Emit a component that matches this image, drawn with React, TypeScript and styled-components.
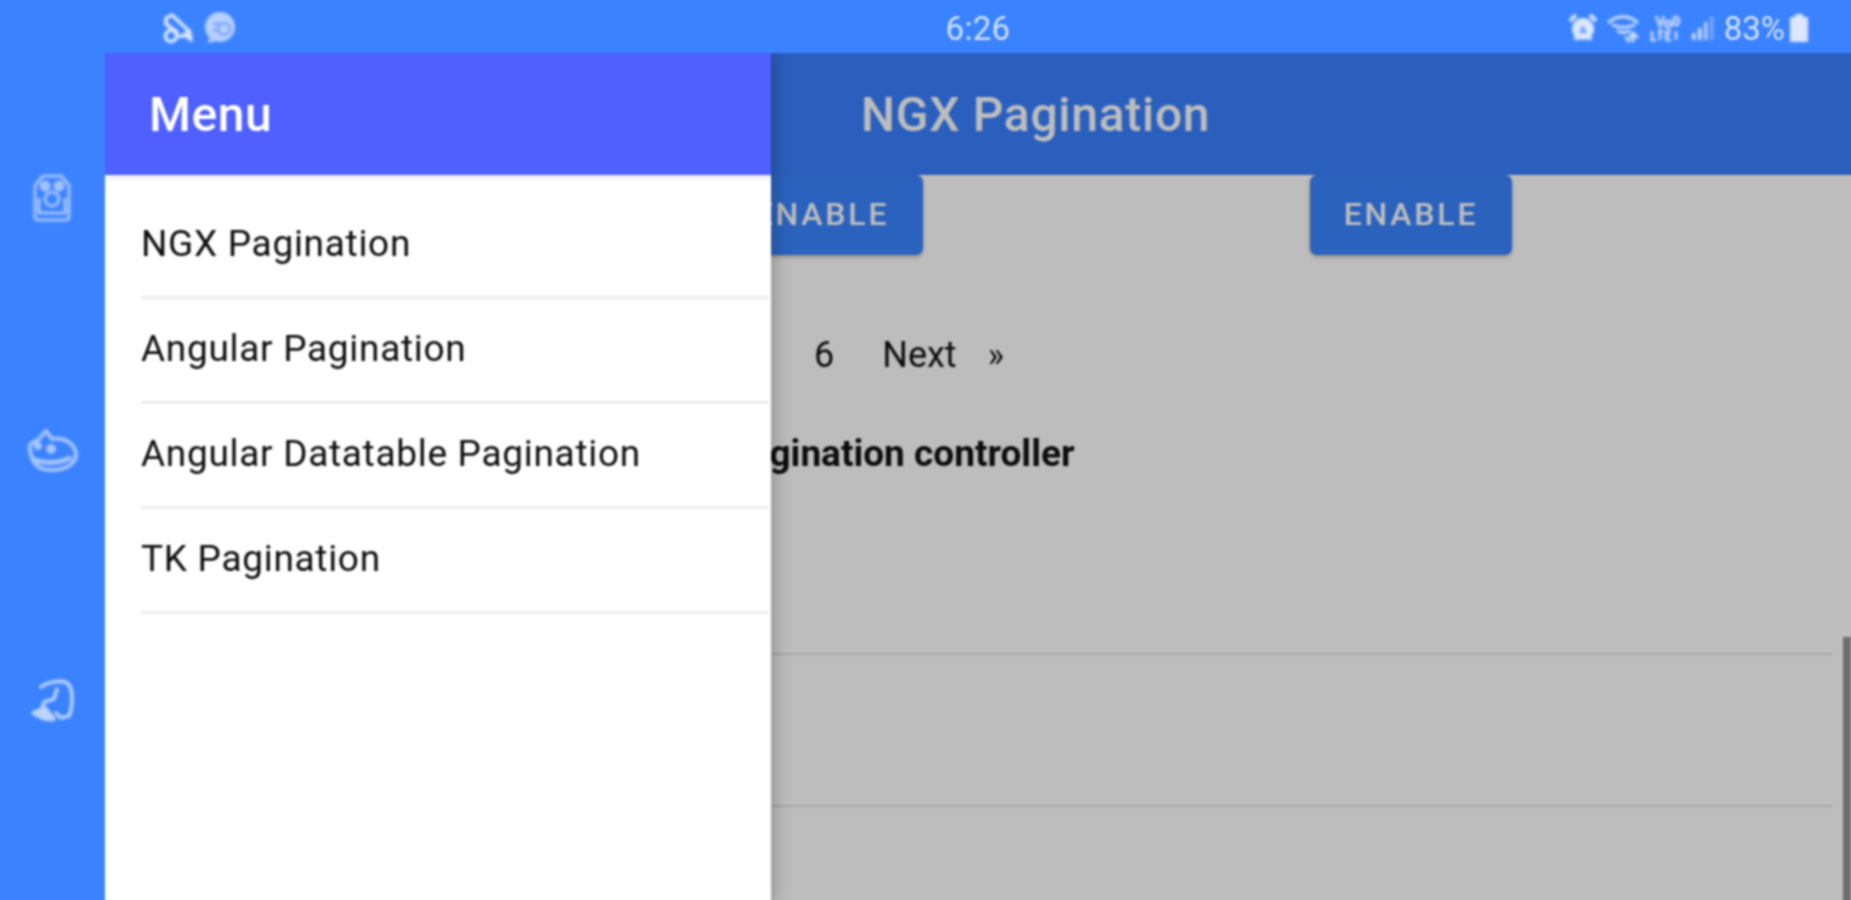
import React from "react";
import styled, { createGlobalStyle } from "styled-components";

const Global = createGlobalStyle`
  html, body { margin: 0; padding: 0; height: 100%; overflow: hidden; background: #3a82ff; }
  #root { height: 100%; }
  * { box-sizing: border-box; }
`;

const Page = styled.div`
  width: 1855px;
  height: 904px;
  display: flex;
  flex-direction: column;
  overflow: hidden;
  background: #3a82ff;
  font-family: Roboto, "Liberation Sans", sans-serif;
  filter: blur(0.8px);
`;

const StatusBar = styled.div`
  height: 53px;
  flex: none;
  display: grid;
  grid-template-columns: 1fr auto 1fr;
  align-items: center;
  padding: 3px 47px 0 163px;
  color: #cfe0ff;
`;

const StatusGroup = styled.div<{ $end?: boolean }>`
  display: flex;
  align-items: center;
  gap: ${(p) => (p.$end ? "9px" : "11px")};
  justify-content: ${(p) => (p.$end ? "flex-end" : "flex-start")};
`;

const Clock = styled.span`
  font-size: 33px;
  margin-left: -15px;
  letter-spacing: 0.3px;
`;

const Percent = styled.span`
  font-size: 33px;
  margin-right: -4px;
`;

const Body = styled.div`
  flex: 1;
  display: flex;
  min-height: 0;
`;

const Rail = styled.nav`
  width: 105px;
  flex: none;
  display: flex;
  flex-direction: column;
  align-items: center;
  padding-top: 121px;
  gap: 206px;
  margin-left: -1px;
`;

const AppArea = styled.div`
  flex: 1;
  position: relative;
  background: #fff;
  overflow: hidden;
  margin-left: 1px;
`;

const Toolbar = styled.header`
  height: 122px;
  background: #3a80ff;
  display: flex;
  align-items: center;
  padding-left: 756px;
`;

const PageTitle = styled.h1`
  margin: 0;
  color: #fff;
  font-size: 48px;
  font-weight: 500;
  letter-spacing: 0.7px;
`;

const ButtonRow = styled.div`
  display: flex;
  gap: 387px;
  padding-left: 616px;
`;

const ActionButton = styled.button`
  width: 202px;
  height: 80px;
  border: 0;
  border-radius: 7px;
  padding-bottom: 3px;
  background: #3a85ff;
  color: #fff;
  font-family: inherit;
  font-size: 32px;
  font-weight: 500;
  letter-spacing: 2.8px;
  box-shadow: 0 2px 4px rgba(0, 0, 0, 0.25);
`;

const Pager = styled.div`
  display: flex;
  align-items: center;
  margin-top: 79px;
  height: 42px;
  padding-left: 709px;
  color: #111;
`;

const PagerItem = styled.span<{ $gap: number; $small?: boolean }>`
  margin-right: ${(p) => p.$gap}px;
  font-size: ${(p) => (p.$small ? "35px" : "36px")};
`;

const SectionTitle = styled.h2`
  margin: 57px 0 0 621px;
  font-size: 37px;
  font-weight: 700;
  line-height: 42px;
  color: #111;
  white-space: nowrap;
`;

const Table = styled.div`
  margin: 28px 23px 0 0;
`;

const TableRow = styled.div`
  height: 152px;
  border-bottom: 2px solid #e2e2e2;
`;

const Scrollbar = styled.div`
  position: absolute;
  right: 4px;
  bottom: 0;
  width: 8px;
  height: 267px;
  background: #959595;
`;

const Backdrop = styled.div`
  position: absolute;
  inset: 0;
  background: rgba(0, 0, 0, 0.26);
`;

const Drawer = styled.aside`
  position: absolute;
  top: 0;
  left: 0;
  bottom: 0;
  width: 666px;
  background: #fff;
  display: flex;
  flex-direction: column;
  box-shadow: 4px 0 16px rgba(0, 0, 0, 0.22);
`;

const DrawerHeader = styled.div`
  height: 122px;
  flex: none;
  background: #4f60ff;
  display: flex;
  align-items: center;
  padding-left: 44px;
  color: #fff;
  font-size: 48px;
  font-weight: 500;
  letter-spacing: 0.5px;
  box-shadow: 0 3px 5px rgba(0, 0, 0, 0.1);
  position: relative;
`;

const MenuList = styled.ul`
  list-style: none;
  margin: 0;
  padding: 19px 0 0 36px;
`;

const MenuItem = styled.li`
  height: 105px;
  display: flex;
  align-items: center;
  padding-bottom: 4px;
  font-size: 37px;
  letter-spacing: 0.7px;
  color: #0d0d0d;
  border-bottom: 3px solid #ededed;
  margin-right: 2px;
`;

const Glyph = styled.svg`
  display: block;
  flex: none;
  overflow: visible;
  filter: blur(1.1px);
`;

const App: React.FC = () => (
  <Page>
    <Global />
    <StatusBar>
      <StatusGroup>
        <Glyph width="30" height="32" viewBox="0 0 30 32" fill="none" stroke="#dbe8ff" strokeWidth="3.6" strokeLinecap="round" strokeLinejoin="round">
          <path d="M3 12V6l6-3 18 17-5 2" />
          <path d="M3 12l11 8" />
          <circle cx="8" cy="24" r="5.5" />
          <path d="M14 24h14M24 24l4 4" />
        </Glyph>
        <Glyph width="33" height="32" viewBox="0 0 33 32">
          <circle cx="16" cy="15" r="15" fill="#b8d0ff" />
          <path d="M5 26l-1 5 8-2z" fill="#b8d0ff" />
          <circle cx="20" cy="17" r="6" fill="none" stroke="#7ca7ff" strokeWidth="2.5" />
          <path d="M9 12h9M9 18h5" stroke="#7ca7ff" strokeWidth="2.5" />
        </Glyph>
      </StatusGroup>
      <Clock>6:26</Clock>
      <StatusGroup $end>
        <Glyph width="30" height="30" viewBox="0 0 30 30">
          <circle cx="15" cy="16" r="11" fill="#dbe8ff" />
          <path d="M2 8l6-6M28 8l-6-6M7 27l2-3M23 27l-2-3" stroke="#dbe8ff" strokeWidth="4" />
          <path d="M11 20l4-8 4 8z" fill="#6f9fff" />
        </Glyph>
        <Glyph width="34" height="30" viewBox="0 0 34 30" fill="none" stroke="#cfe0ff" strokeWidth="3" strokeLinecap="round">
          <path d="M2 9c8-7 20-7 28 0" />
          <path d="M6 12c6 3 15 3 21 0" />
          <path d="M11 18c3 2 8 2 11 0" />
          <path d="M19 25l3 3M26 20v8M23 24l3-4 4 4" />
        </Glyph>
        <Glyph width="32" height="30" viewBox="0 0 32 30" fill="none" stroke="#c3d8ff" strokeWidth="2.8">
          <path d="M6 3l4 10 4-10M18 8a3 3 0 1 0 .01 0M24 3v10M26 3c4 3 4 7 0 10" />
          <path d="M2 18v9h4M10 18v9M8 18h5M16 18v9M16 18h5M16 22h4M16 27h5M26 18v9" />
        </Glyph>
        <Glyph width="24" height="30" viewBox="0 0 24 30">
          <rect x="1" y="20" width="3.5" height="7" fill="#d2e2ff" />
          <rect x="7" y="15" width="3.5" height="12" fill="#d2e2ff" />
          <rect x="13" y="9" width="3.5" height="18" fill="#b4ceff" />
          <rect x="19" y="3" width="3.5" height="24" fill="#7ea6ff" />
        </Glyph>
        <Percent>83%</Percent>
        <Glyph width="18" height="28" viewBox="0 0 18 28">
          <path d="M5 0h8v3h4a1 1 0 0 1 1 1v23a1 1 0 0 1-1 1H1a1 1 0 0 1-1-1V4a1 1 0 0 1 1-1h4z" fill="#dbe8ff" />
        </Glyph>
      </StatusGroup>
    </StatusBar>
    <Body>
      <Rail>
        <Glyph width="38" height="48" viewBox="0 0 38 48" fill="none" stroke="#a3c3ff" strokeWidth="3.2" strokeLinejoin="round">
          <path d="M10 2h18l8 9v32a3 3 0 0 1-3 3H5a3 3 0 0 1-3-3V11z" />
          <circle cx="12" cy="12" r="4" fill="#a3c3ff" />
          <circle cx="26" cy="12" r="4" fill="#a3c3ff" />
          <circle cx="19" cy="25" r="7" />
          <path d="M6 24v15h26V24" />
        </Glyph>
        <Glyph width="52" height="44" viewBox="0 0 52 44" fill="none" stroke="#a6c5ff" strokeWidth="4" strokeLinejoin="round">
          <path d="M4 22c-2-7 4-8 8-10l8-9 6 8c12-2 22 4 24 14 1 10-10 17-24 17S6 36 4 22z" />
          <path d="M7 31c10 5 28 5 38-2" strokeWidth="5" />
          <circle cx="25" cy="21" r="4" fill="#a6c5ff" strokeWidth="2" />
          <circle cx="12" cy="18" r="3" fill="#a6c5ff" strokeWidth="2" />
        </Glyph>
        <Glyph width="44" height="46" viewBox="0 0 44 46" fill="none" stroke="#bcd4ff" strokeWidth="3.6" strokeLinecap="round" strokeLinejoin="round">
          <path d="M11 9c8-6 24-8 28-2 5 8 3 24 0 31l-8 2-5-5" />
          <path d="M27 11l-3 10-10 3-2 8" />
          <path d="M13 30L3 35c6 4 14 8 21 6l-9-11" fill="#bcd4ff" />
        </Glyph>
      </Rail>
      <AppArea>
        <Toolbar>
          <PageTitle>NGX Pagination</PageTitle>
        </Toolbar>
        <ButtonRow>
          <ActionButton>ENABLE</ActionButton>
          <ActionButton>ENABLE</ActionButton>
        </ButtonRow>
        <Pager>
          <PagerItem $gap={48}>6</PagerItem>
          <PagerItem $gap={31}>Next</PagerItem>
          <PagerItem $gap={0} $small>»</PagerItem>
        </Pager>
        <SectionTitle>Pagination controller</SectionTitle>
        <Table>
          <TableRow />
          <TableRow />
        </Table>
        <Scrollbar />
        <Backdrop />
        <Drawer>
          <DrawerHeader>Menu</DrawerHeader>
          <MenuList>
            <MenuItem>NGX Pagination</MenuItem>
            <MenuItem>Angular Pagination</MenuItem>
            <MenuItem>Angular Datatable Pagination</MenuItem>
            <MenuItem>TK Pagination</MenuItem>
          </MenuList>
        </Drawer>
      </AppArea>
    </Body>
  </Page>
);

export default App;
